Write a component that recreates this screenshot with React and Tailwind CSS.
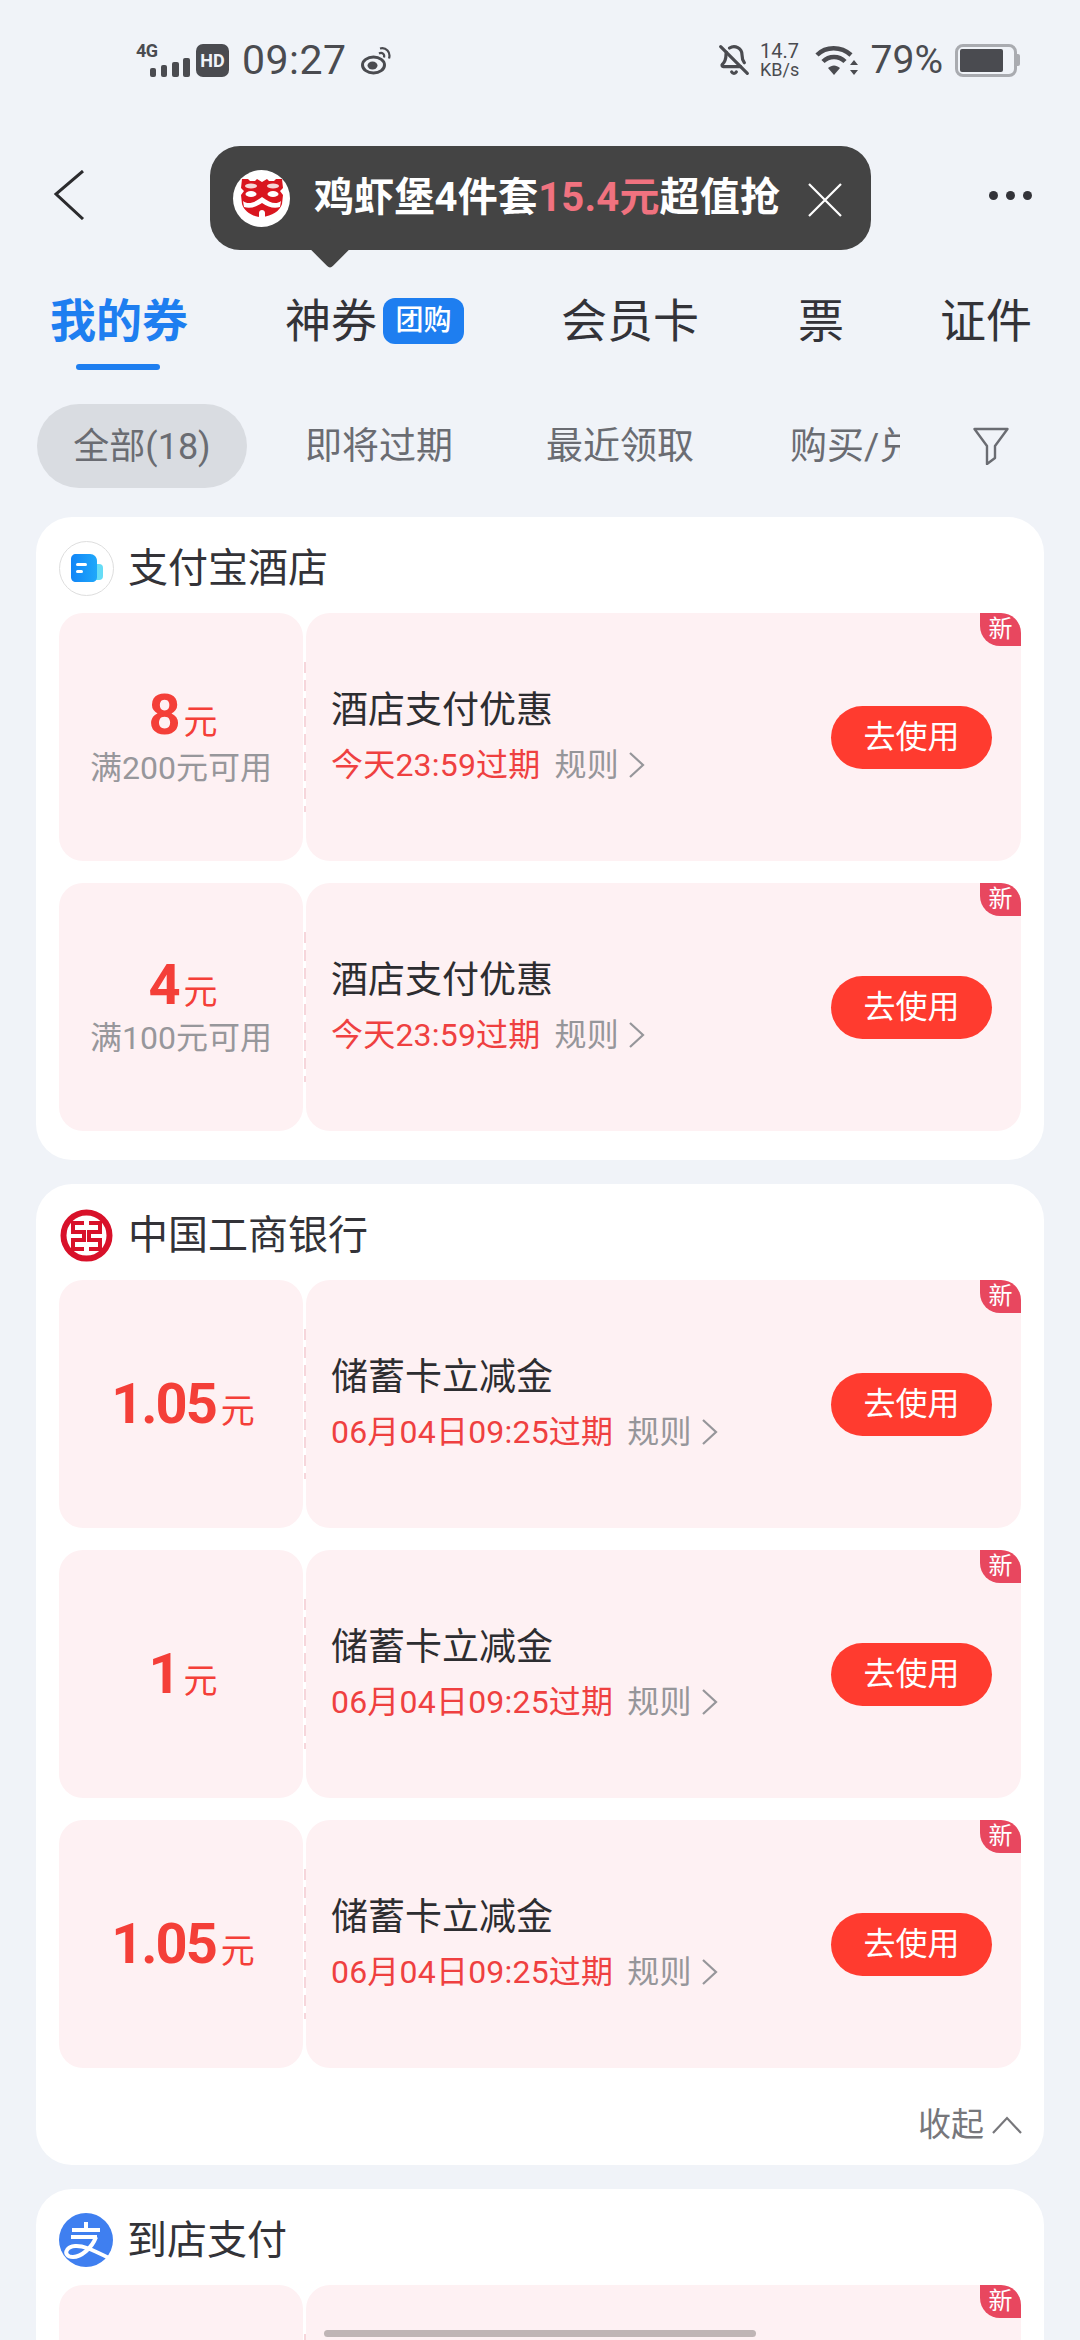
import React from 'react';
import { BellOff } from 'lucide-react';

const Chevron = ({ className, points, width = 20 }) => (
  <svg className={className} width={width} height="30" viewBox={`0 0 ${width} 30`} fill="none" stroke="currentColor" strokeWidth="2.2">
    <polyline points={points} />
  </svg>
);

const StatusBar = () => (
  <div className="h-[120px] flex items-center pl-[136px] pr-[60px] text-[#4a4b50]">
    <div className="flex items-center">
      <div className="relative w-[54px] h-[34px] shrink-0">
        <span className="absolute left-0 -top-[1px] text-[18px] leading-[17px] font-bold tracking-[-0.5px]">4G</span>
        <svg className="absolute right-0 bottom-0" width="40" height="19" viewBox="0 0 40 19" fill="currentColor">
          <rect x="0" y="10" width="6" height="9" rx="2" />
          <rect x="11" y="7" width="6" height="12" rx="2" />
          <rect x="22" y="4" width="7" height="15" rx="2" />
          <rect x="33" y="0" width="7" height="19" rx="2" />
        </svg>
      </div>
      <div className="ml-[6px] w-[33px] h-[33px] rounded-[7px] bg-[#4a4b50] text-[#f0f3f8] text-[18px] leading-[33px] font-bold text-center">HD</div>
      <span className="ml-[13px] text-[41px] leading-[40px] tracking-[0.5px]">09:27</span>
      <svg className="ml-[14px]" width="30" height="29" viewBox="0 0 30 29" fill="none" stroke="currentColor">
        <ellipse cx="12.5" cy="19" rx="11" ry="8" strokeWidth="3" />
        <ellipse cx="11.5" cy="19.5" rx="5" ry="4" fill="currentColor" stroke="none" />
        <path d="M18 7.5c3-1.5 6 .5 5 4" strokeWidth="2.2" />
        <path d="M19 2.5c6-1.500 11 3.500 9 10" strokeWidth="2.2" />
      </svg>
    </div>
    <div className="ml-auto flex items-center">
      <BellOff size={32} strokeWidth={2.4} />
      <div className="ml-[7px] w-[46px] flex flex-col items-center">
        <span className="text-[20px] leading-[19px]">14.7</span>
        <span className="text-[18px] leading-[17px]">KB/s</span>
      </div>
      <svg className="ml-[12px]" width="44" height="31" viewBox="0 0 44 31" fill="none" stroke="currentColor">
        <path d="M2 10 C11 1 26 1 36 10" strokeWidth="4.5" />
        <path d="M8 16.500 C14 10.500 24 10.500 30 16.500" strokeWidth="4.500" />
        <path d="M13 23 L19 30 L25 23 C21 19.500 17 19.500 13 23Z" fill="currentColor" stroke="none" />
        <path d="M39 15 l4 5 h-8z M39 30 l4 -5 h-8z" fill="currentColor" stroke="none" />
      </svg>
      <span className="ml-[12px] text-[39px] leading-[40px]">79%</span>
      <div className="ml-[12px] flex items-center">
        <div className="w-[62px] h-[33px] rounded-[8px] border-[3px] border-[#a9abb0] p-[2px]">
          <div className="h-full w-[43px] rounded-[2px] bg-[#4a4b50]" />
        </div>
        <div className="w-[3px] h-[12px] rounded-r-[2px] bg-[#a9abb0]" />
      </div>
    </div>
  </div>
);

const MaskLogo = () => (
  <div className="w-[57px] h-[57px] rounded-full bg-white flex items-center justify-center shrink-0">
    <svg width="44" height="42" viewBox="0 0 44 42">
      <path d="M2 2h6l2 2h5l2-2 5 3 5-3 2 2h5l2-2h6l1 9-3 3 3 4 -1 9c-2 7-10 12-20 13C12 40 4 34 2 27L1 18l3-4-3-3z" fill="#d9161f" />
      <ellipse cx="11" cy="9" rx="6" ry="2.600" fill="#f7d6d6" />
      <ellipse cx="33" cy="9" rx="6" ry="2.600" fill="#f7d6d6" />
      <ellipse cx="11" cy="17" rx="5.500" ry="3" fill="#fff" />
      <ellipse cx="33" cy="17" rx="5.500" ry="3" fill="#fff" />
      <path d="M3 24c5 4 11 2 19-4 8 6 14 8 19 4l-1 6c-6 2-12 0-18-4-6 4-12 6-18 4z" fill="#fff" />
      <path d="M19 42v-6c0-2 1.500-3 3-3s3 1 3 3v6z" fill="#fff" />
    </svg>
  </div>
);

const TipBubble = () => (
  <div className="absolute left-[210px] top-[146px] w-[661px] h-[104px] rounded-[30px] bg-[#444444] flex items-center pl-[23px]">
    <MaskLogo />
    <p className="ml-[24px] text-[40px] leading-[48px] font-bold tracking-[0.2px] text-white whitespace-nowrap">
      鸡虾堡4件套<span className="text-[#f0727f]">15.4元</span>超值抢
    </p>
    <svg className="absolute left-[598px] top-[37px]" width="34" height="34" viewBox="0 0 34 34" stroke="#fff" strokeWidth="2.2">
      <path d="M1 1l32 32M33 1L1 33" />
    </svg>
    <div className="absolute left-[106px] -bottom-[13px] w-[28px] h-[28px] rotate-45 rounded-br-[4px] bg-[#444444]" />
  </div>
);

const NavBar = () => (
  <div className="h-[150px] flex items-center justify-between pl-[53px] pr-[48px]">
    <svg width="32" height="50" viewBox="0 0 32 50" fill="none" stroke="#2b2b2e" strokeWidth="3">
      <polyline points="30,1 3,24 30,49" />
    </svg>
    <div className="flex gap-[8px]">
      <span className="w-[9px] h-[9px] rounded-full bg-[#333339]" />
      <span className="w-[9px] h-[9px] rounded-full bg-[#333339]" />
      <span className="w-[9px] h-[9px] rounded-full bg-[#333339]" />
    </div>
  </div>
);

const Tabs = () => (
  <div className="h-[104px] flex items-start pt-[28px] pl-[50px] text-[46px] leading-[46px] text-[#333338] whitespace-nowrap">
    <div className="relative w-[235px] shrink-0 font-bold text-[#1e7ef0]">
      我的券
      <div className="absolute left-[26px] top-[66px] w-[84px] h-[6px] rounded-full bg-[#1e7ef0]" />
    </div>
    <div className="w-[276px] shrink-0 flex items-center">
      神券
      <span className="ml-[6px] w-[81px] h-[46px] rounded-[12px] bg-[#1e7ef0] text-white text-[28px] leading-[46px] text-center font-medium">团购</span>
    </div>
    <div className="w-[237px] shrink-0">会员卡</div>
    <div className="w-[142px] shrink-0">票</div>
    <div>证件</div>
  </div>
);

const Filters = () => (
  <div className="h-[84px] mt-[30px] flex items-center pl-[37px] text-[37px] text-[#6a6c72] whitespace-nowrap">
    <div className="w-[210px] h-[84px] pt-[2px] shrink-0 rounded-full bg-[#d9dce1] flex items-center justify-center text-[36px]">全部(18)</div>
    <div className="ml-[58px] mt-[2px] w-[241px] shrink-0">即将过期</div>
    <div className="w-[244px] mt-[2px] shrink-0">最近领取</div>
    <div className="w-[110px] mt-[2px] shrink-0 overflow-hidden">购买/兑换</div>
    <svg className="ml-[73px]" width="36" height="38" viewBox="0 0 36 38" fill="none" stroke="#6a6c72" strokeWidth="2.400" strokeLinejoin="round">
      <path d="M1.500 2h33L22 19v12l-8 6V19z" />
    </svg>
  </div>
);

// third card's coupon runs off the page, so its text is optional
const Coupon = ({ amount, condition, title, expire }) => (
  <div className="h-[248px] flex shrink-0">
    <div className="w-[244px] rounded-[24px] bg-[#fef1f3] flex flex-col items-center justify-center">
      {amount && (
        <div className="flex items-baseline pl-[4px] text-[#f43f38]">
          <span className="text-[56px] leading-[58px] font-bold tracking-[-2px]">{amount}</span>
          <span className="ml-[5px] text-[34px] leading-[40px]">元</span>
        </div>
      )}
      {condition && <div className="text-[32px] leading-[40px] text-[#97979b] mt-[4px] whitespace-nowrap">{condition}</div>}
    </div>
    <div className="w-[3px] my-[49px] flex justify-center">
      <div className="w-[2px] h-full bg-[repeating-linear-gradient(to_bottom,#f6d6db_0,#f6d6db_11px,transparent_11px,transparent_18px)]" />
    </div>
    <div className="relative flex-1 rounded-[24px] bg-[#fef1f3] flex items-center pl-[25px] pr-[29px]">
      {title && (
        <div className="flex flex-col -mt-[2px]">
          <div className="text-[37px] leading-[46px] text-[#2d2d30] whitespace-nowrap">{title}</div>
          <div className="mt-[11px] flex items-center text-[32px] leading-[40px] tracking-[0.2px] whitespace-nowrap">
            <span className="text-[#ef4040]">{expire}</span>
            <span className="ml-[14px] text-[#96969a]">规则</span>
            <Chevron className="ml-[8px] text-[#96969a]" points="3,3 16,15 3,27" />
          </div>
        </div>
      )}
      {title && <div className="ml-auto w-[161px] h-[63px] rounded-full bg-[#ff3b2f] text-white text-[32px] leading-[63px] text-center">去使用</div>}
      <div className="absolute right-0 top-0 w-[41px] h-[33px] rounded-bl-[20px] rounded-tr-[20px] bg-[#e8475f] text-white text-[24px] leading-[33px] text-center">新</div>
    </div>
  </div>
);

const HotelIcon = () => (
  <div className="w-[55px] h-[55px] rounded-full border border-[#dedede] flex items-center justify-center shrink-0">
    <svg width="32" height="30" viewBox="0 0 32 30">
      <defs>
        <linearGradient id="hotelBlue" x1="0" x2="1" y1="0" y2="0">
          <stop offset="0" stopColor="#1185f7" />
          <stop offset="1" stopColor="#20a8fa" />
        </linearGradient>
      </defs>
      <rect x="18" y="11" width="14" height="16" rx="4" fill="#66dcf6" />
      <path d="M5 1h14c4 0 7 3 7 7v16c0 3-2 5-5 5H5c-3 0-5-2-5-5V6c0-3 2-5 5-5z" fill="url(#hotelBlue)" />
      <rect x="5" y="10" width="11" height="3" rx="1.500" fill="#fff" />
      <rect x="5" y="17" width="7" height="3" rx="1.500" fill="#fff" />
    </svg>
  </div>
);

const BankIcon = () => (
  <svg className="shrink-0" width="55" height="55" viewBox="0 0 55 55" fill="none" stroke="#d8112a">
    <circle cx="27.500" cy="27.500" r="23" strokeWidth="6" />
    <path d="M25 15H14v9h11v8H14v9h11M30 15h11v9H30v8h11v9H30" strokeWidth="4" />
  </svg>
);

const AlipayIcon = () => (
  <svg className="shrink-0" width="54" height="54" viewBox="0 0 54 54" fill="none" stroke="#fff" strokeWidth="4">
    <circle cx="27" cy="27" r="27" fill="#3f7ff0" stroke="none" />
    <path d="M27 9v9M13 17h28M12 24h26" />
    <path d="M37 24C33 35 22 44 14 44c-6 0-8-4-6-7 3-5 12-5 20-2 8 3 16 7 24 11" />
  </svg>
);

const Card = ({ icon, name, children, className = '' }) => (
  <div className={`rounded-[36px] bg-white px-[23px] flex flex-col shrink-0 ${className}`}>
    <div className="h-[96px] pt-[6px] flex items-center shrink-0">
      {icon}
      <span className="ml-[14px] mt-[2px] text-[40px] leading-[48px] text-[#333338]">{name}</span>
    </div>
    {children}
  </div>
);

const App = () => {
  return (
    <div className="relative w-[1080px] h-[2340px] overflow-hidden bg-[#f0f3f8] font-[Roboto,'Noto_Sans_CJK_SC',sans-serif]">
      <StatusBar />
      <NavBar />
      <Tabs />
      <Filters />
      <TipBubble />

      <div className="mt-[29px] px-[36px] flex flex-col gap-[24px]">
        <Card icon={<HotelIcon />} name="支付宝酒店" className="pb-[29px]">
          <div className="flex flex-col gap-[22px]">
            <Coupon amount="8" condition="满200元可用" title="酒店支付优惠" expire="今天23:59过期" />
            <Coupon amount="4" condition="满100元可用" title="酒店支付优惠" expire="今天23:59过期" />
          </div>
        </Card>

        <Card icon={<BankIcon />} name="中国工商银行">
          <div className="flex flex-col gap-[22px]">
            <Coupon amount="1.05" title="储蓄卡立减金" expire="06月04日09:25过期" />
            <Coupon amount="1" title="储蓄卡立减金" expire="06月04日09:25过期" />
            <Coupon amount="1.05" title="储蓄卡立减金" expire="06月04日09:25过期" />
          </div>
          <div className="h-[97px] pt-[16px] flex items-center justify-end text-[33px] text-[#77777b]">
            收起
            <svg className="ml-[8px] -mr-[1px]" width="30" height="18" viewBox="0 0 30 18" fill="none" stroke="currentColor" strokeWidth="2.200">
              <polyline points="1,17 15,2 29,17" />
            </svg>
          </div>
        </Card>

        <Card icon={<AlipayIcon />} name="到店支付">
          <Coupon />
        </Card>
      </div>

      {/* home indicator */}
      <div className="absolute left-[324px] top-[2330px] w-[432px] h-[7px] rounded-full bg-[#bfb5b5]" />
    </div>
  );
};

export default App;
